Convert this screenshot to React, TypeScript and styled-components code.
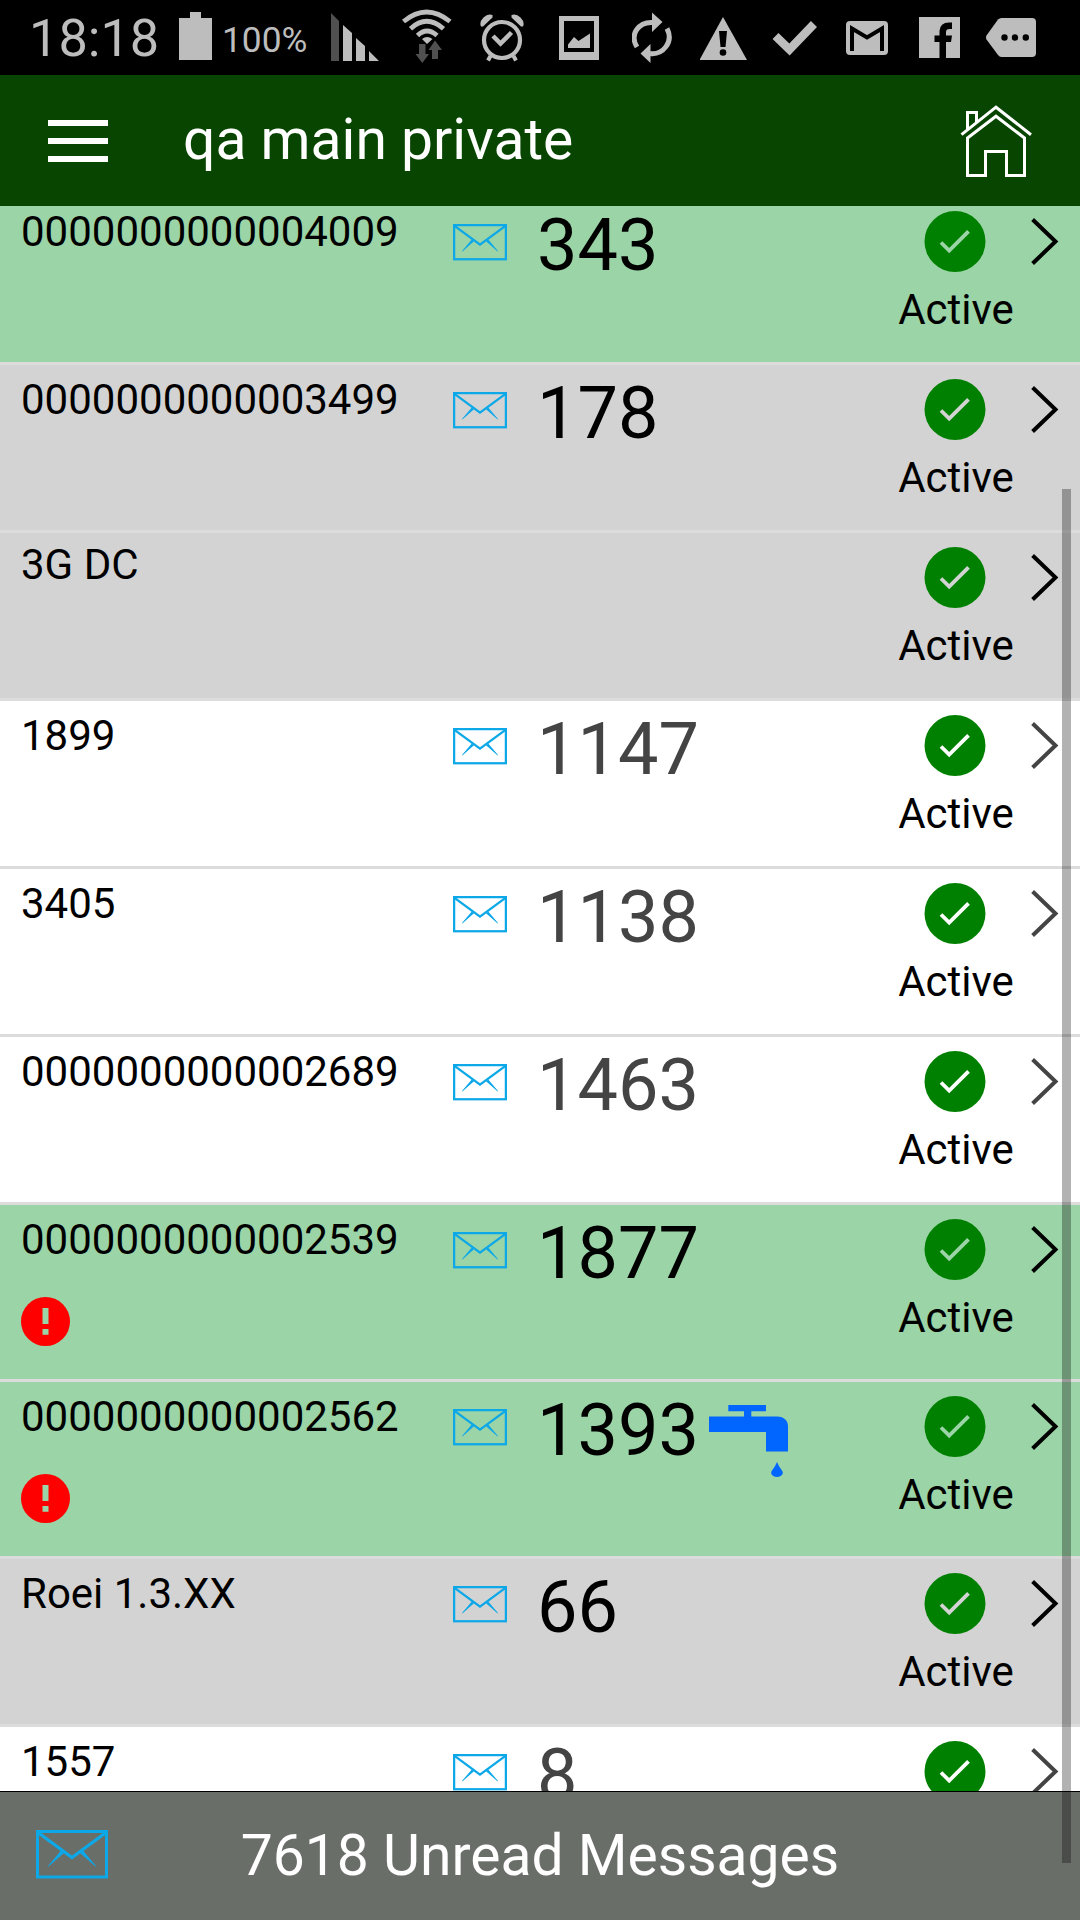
import React from 'react';
import styled, { createGlobalStyle } from 'styled-components';

const GlobalStyle = createGlobalStyle`
  *, *::before, *::after { box-sizing: border-box; }
  body {
    margin: 0;
    background: #000;
    font-family: Roboto, "Noto Sans", sans-serif;
    -webkit-font-smoothing: antialiased;
  }
  svg { display: block; flex: none; }
`;

const STATUS_GREY = '#bdbdbd';
const DIM_GREY = '#505050';
const MAIL_BLUE = '#0ca8e8';

type Tone = 'green' | 'grey' | 'white';
const toneColor: Record<Tone, string> = {
  green: '#9bd4a6',
  grey: '#d3d3d3',
  white: '#ffffff',
};

const Screen = styled.div`
  position: relative;
  display: flex;
  flex-direction: column;
  width: 1080px;
  height: 1920px;
  overflow: hidden;
`;

const StatusBar = styled.div`
  display: flex;
  flex: none;
  height: 75px;
  background: #000;
  color: ${STATUS_GREY};
`;

const Clock = styled.span`
  width: 149px;
  padding-left: 29px;
  font-size: 52.3px;
  line-height: 76px;
  white-space: nowrap;
`;

const BatteryLevel = styled.span`
  width: 109px;
  padding-left: 10px;
  font-size: 35.3px;
  line-height: 80px;
  white-space: nowrap;
`;

const StatusIcon = styled.svg<{ $before: number }>`
  height: 75px;
  margin-left: ${(p) => p.$before}px;
`;

const AppBar = styled.header`
  display: flex;
  flex: none;
  align-items: center;
  height: 131px;
  padding: 0 48px;
  background: #074500;
  color: #fff;
`;

const MenuButton = styled.button`
  display: flex;
  flex-direction: column;
  gap: 12px;
  width: 60px;
  padding: 0;
  border: 0;
  background: none;
`;

const MenuLine = styled.span`
  height: 6px;
  background: #fff;
`;

const Title = styled.h1`
  flex: 1;
  margin: 0;
  padding: 0 0 2px 75px;
  font-size: 57px;
  font-weight: 400;
  line-height: 68px;
`;

const List = styled.main`
  flex: 1;
  min-height: 0;
  overflow: hidden;
  background: #fff;
`;

const Rows = styled.div`
  display: flex;
  flex-direction: column;
  margin-top: -9px;
`;

const Row = styled.div<{ $tone: Tone; $tall: boolean }>`
  display: flex;
  flex: none;
  align-items: flex-start;
  height: ${(p) => (p.$tall ? 177 : 168)}px;
  border-bottom: 3px solid #dcdcdc;
  background: ${(p) => toneColor[p.$tone]};
  color: #000;
`;

const NameCell = styled.div<{ $raised: boolean }>`
  display: flex;
  flex-direction: column;
  gap: 32px;
  width: 453px;
  padding: ${(p) => (p.$raised ? 7 : 10)}px 0 0 21px;
`;

const Name = styled.span`
  font-size: 42px;
  line-height: 50px;
  white-space: nowrap;
`;

const MessagesCell = styled.div`
  display: flex;
  flex: 1;
  align-items: flex-start;
`;

const EnvelopeBox = styled.div`
  padding-top: 27px;
`;

const Count = styled.span<{ $muted: boolean }>`
  margin: 7px 0 0 30px;
  font-size: 72px;
  line-height: 84px;
  color: ${(p) => (p.$muted ? '#444' : '#000')};
`;

const FaucetBox = styled.div`
  padding: 23px 0 0 10px;
`;

const StatusCell = styled.div`
  display: flex;
  flex-direction: column;
  gap: 12px;
  align-items: center;
  width: 114px;
  padding-top: 14px;
`;

const StatusMark = styled.div`
  padding-right: 2px;
`;

const StatusLabel = styled.span`
  font-size: 42px;
  line-height: 50px;
`;

const ChevronBox = styled.div`
  width: 67px;
  padding: 20px 0 0 18px;
`;

const Footer = styled.footer`
  display: flex;
  flex: none;
  align-items: center;
  height: 129px;
  padding: 0 36px;
  border-top: 1px solid #000;
  background: #6a6e69;
  color: #fff;
`;

const FooterEnvelope = styled.div`
  padding-bottom: 3px;
`;

const FooterText = styled.span`
  flex: 1;
  padding-right: 72px;
  font-size: 57px;
  line-height: 68px;
  text-align: center;
`;

const ScrollThumb = styled.div`
  position: absolute;
  top: 489px;
  right: 9px;
  width: 9px;
  height: 1374px;
  background: rgba(0, 0, 0, 0.3);
`;

const Envelope = ({ width }: { width: number }) => (
  <svg width={width} height={(width * 49) / 72} viewBox="0 0 72 49" fill="none" stroke={MAIL_BLUE}>
    <rect x="1.5" y="1.5" width="69" height="45.5" strokeWidth="3" />
    <path d="M2 2.5 36 27.5 70 2.5" strokeWidth="3.2" />
    <path d="M25 20.5 28 23 12.5 36.5 12 36ZM47 20.5 44 23 59.5 36.5 60 36Z" fill={MAIL_BLUE} stroke="none" />
  </svg>
);

const ActiveMark = ({ tick }: { tick: string }) => (
  <svg width="62" height="62" viewBox="0 0 62 62">
    <circle cx="31" cy="30.500" r="30.5" fill="#008000" />
    <path d="M17 31.500 25.2 39.500 44.500 20.300" fill="none" stroke={tick} strokeWidth="3.8" />
  </svg>
);

const Chevron = ({ color }: { color: string }) => (
  <svg width="28" height="48" viewBox="0 0 28 48" fill="none">
    <path d="M1.6 2.5 24.5 24.5 1.6 46.5" stroke={color} strokeWidth="4" />
  </svg>
);

const Alert = ({ mark }: { mark: string }) => (
  <svg width="49" height="49" viewBox="0 0 49 49">
    <circle cx="24.5" cy="24.5" r="24.5" fill="#ff0000" />
    <path d="M21.5 11h6v16h-6zM21.5 32h6v5.7h-6z" fill={mark} />
  </svg>
);

const Faucet = () => (
  <svg width="80" height="73" viewBox="0 0 80 73" fill="#0066ff">
    <path d="M19.3 0H57V6.3H42.3V11.5H68Q79 12 79 22V46.5H57V27H0V11.5H35V6.3H19.3Z" />
    <path d="M68 57Q69.5 61 73 65.5C75.500 69 72 72 68 72S60.500 69 63 65.500Q66.500 61 68 57Z" />
  </svg>
);

const Home = () => (
  <svg width="72" height="72" viewBox="960 105 72 72" fill="none" stroke="#fff" strokeWidth="3">
    <path d="M961.500 134.700 996 107.200 1031 134.700" />
    <path d="M967.500 130V112.500H976.500V122" />
    <path d="M967.500 175.500V138L996 116.200 1024.500 138V175.500H1006.500V151.500H985.500V175.500Z" />
  </svg>
);

interface Unit {
  name: string;
  count?: number;
  tone: Tone;
  alert?: boolean;
  faucet?: boolean;
}

const units: Unit[] = [
  { name: '0000000000004009', count: 343, tone: 'green' },
  { name: '0000000000003499', count: 178, tone: 'grey' },
  { name: '3G DC', tone: 'grey' },
  { name: '1899', count: 1147, tone: 'white' },
  { name: '3405', count: 1138, tone: 'white' },
  { name: '0000000000002689', count: 1463, tone: 'white' },
  { name: '0000000000002539', count: 1877, tone: 'green', alert: true },
  { name: '0000000000002562', count: 1393, tone: 'green', alert: true, faucet: true },
  { name: 'Roei 1.3.XX', count: 66, tone: 'grey' },
  { name: '1557', count: 8, tone: 'white' },
];

const UnitRow = ({ unit }: { unit: Unit }) => {
  const bg = toneColor[unit.tone];
  const muted = unit.tone === 'white';
  return (
    <Row $tone={unit.tone} $tall={!!unit.alert}>
      <NameCell $raised={unit.count === undefined}>
        <Name>{unit.name}</Name>
        {unit.alert && <Alert mark={bg} />}
      </NameCell>
      <MessagesCell>
        {unit.count !== undefined && (
          <>
            <EnvelopeBox>
              <Envelope width={54} />
            </EnvelopeBox>
            <Count $muted={muted}>{unit.count}</Count>
          </>
        )}
        {unit.faucet && (
          <FaucetBox>
            <Faucet />
          </FaucetBox>
        )}
      </MessagesCell>
      <StatusCell>
        <StatusMark>
          <ActiveMark tick={bg} />
        </StatusMark>
        <StatusLabel>Active</StatusLabel>
      </StatusCell>
      <ChevronBox>
        <Chevron color={muted ? '#444' : '#000'} />
      </ChevronBox>
    </Row>
  );
};

const StatusIcons = () => (
  <>
    <StatusIcon $before={10} width="49" viewBox="331 0 49 75" fill={STATUS_GREY}>
      <path d="M331 13 339 21V61H331Z" fill={DIM_GREY} />
      <path d="M343 25 352 33V61H343ZM356 38 365 46V61H356ZM369 51 379 61H369Z" />
    </StatusIcon>
    <StatusIcon $before={22} width="50" viewBox="402 0 50 75" fill="none" stroke={STATUS_GREY} strokeWidth="4.800">
      <path d="M403.500 21.500Q426.500 2.500 450 21.500" />
      <path d="M410.500 28.700Q426.500 14 443.500 28.700" />
      <path d="M417.500 35.500Q427 26.500 437 35.500" />
      <path d="M422 39Q427 35 432.500 39L427 44Z" fill={STATUS_GREY} stroke="none" />
      <path d="M419 44H425.500V54H429L422.300 63 415.500 54H419ZM432 59V50H428.500L435 40.500 442 50H438V59Z" fill={DIM_GREY} stroke="none" />
    </StatusIcon>
    <StatusIcon $before={28} width="44" viewBox="480 0 44 75" fill="none" stroke={STATUS_GREY}>
      <circle cx="502" cy="40" r="18" strokeWidth="4.200" />
      <path d="M493 36 500.500 43.500 511.500 32.500" strokeWidth="4.500" />
      <path d="M490.500 56 488 60.500M513.500 56 516 60.500" strokeWidth="4" />
      <path d="M481 26.500Q479 22 483.500 17.500 488 13 492.500 15L492.500 17.500 483 26.500ZM523 26.500Q525 22 520.500 17.500 516 13 511.500 15V17.500L521 26.500Z" fill={STATUS_GREY} stroke="none" />
    </StatusIcon>
    <StatusIcon $before={35} width="40" viewBox="559 0 40 75">
      <path d="M559 16H599V60H559ZM564 21V52H594V21Z" fill={STATUS_GREY} fillRule="evenodd" />
      <path d="M568 48V44.500L574 37 578.500 41 590 33.500V48Z" fill={STATUS_GREY} />
    </StatusIcon>
    <StatusIcon $before={33} width="40" viewBox="632 0 40 75" fill="none" stroke={STATUS_GREY} strokeWidth="5">
      <path d="M637 47C629 34 639 21.500 653 22.500" />
      <path d="M667 28.500C674 42 663 55 650 53.500" />
      <path d="M652 12.500 662.500 22 652 32ZM650.500 44V63L640.500 53.500Z" fill={STATUS_GREY} stroke="none" />
    </StatusIcon>
    <StatusIcon $before={28} width="47" viewBox="700 0 47 75">
      <path d="M723 17 747 60H699.500Z" fill={STATUS_GREY} />
      <path d="M719 31H727L725.500 47H720.500Z" fill="#000" />
      <circle cx="723" cy="52.500" r="3.300" fill="#000" />
    </StatusIcon>
    <StatusIcon $before={25} width="45" viewBox="772 0 45 75" fill="none">
      <path d="M775.500 36 789.500 49.500 814 24" stroke={STATUS_GREY} strokeWidth="8.500" />
    </StatusIcon>
    <StatusIcon $before={29} width="42" viewBox="846 0 42 75">
      <rect x="846" y="21" width="42" height="34" rx="4" fill={STATUS_GREY} />
      <path d="M852 51V28.500L867 37.500 882 28.500V51" fill="none" stroke="#000" strokeWidth="4" />
    </StatusIcon>
    <StatusIcon $before={31} width="41" viewBox="919 0 41 75">
      <path d="M919 17H960V58H919Z" fill={STATUS_GREY} />
      <path d="M939.500 58V42H934.500V35.500H939.500V31Q940 22.500 949 22.500H952V29H949.500Q946 29 946 32V35.500H952L951 42H946V58Z" fill="#000" />
    </StatusIcon>
    <StatusIcon $before={26} width="50" viewBox="986 0 50 75">
      <path d="M998 19.500Q999.500 18 1001.500 18H1032Q1036 18 1036 22V53Q1036 57 1032 57H1001.500Q999.500 57 998 55L986.500 39.500Q985.500 37.500 986.500 35.500Z" fill={STATUS_GREY} />
      <path d="M1001.300 37.500a3.200 3.200 0 1 0 6.400 0a3.200 3.200 0 1 0 -6.400 0M1011.800 37.500a3.200 3.200 0 1 0 6.400 0a3.200 3.200 0 1 0 -6.400 0M1022.600 37.500a3.200 3.200 0 1 0 6.400 0a3.200 3.200 0 1 0 -6.400 0" />
    </StatusIcon>
  </>
);

export default function App() {
  return (
    <Screen>
      <GlobalStyle />
      <StatusBar>
        <Clock>18:18</Clock>
        <StatusIcon $before={30} width="33" viewBox="179 0 33 75">
          <path d="M190 12H201V18H212V60H179V18H190Z" fill={STATUS_GREY} />
        </StatusIcon>
        <BatteryLevel>100%</BatteryLevel>
        <StatusIcons />
      </StatusBar>
      <AppBar>
        <MenuButton aria-label="Menu">
          <MenuLine />
          <MenuLine />
          <MenuLine />
        </MenuButton>
        <Title>qa main private</Title>
        <Home />
      </AppBar>
      <List>
        <Rows>
          {units.map((unit) => (
            <UnitRow key={unit.name} unit={unit} />
          ))}
        </Rows>
      </List>
      <Footer>
        <FooterEnvelope>
          <Envelope width={72} />
        </FooterEnvelope>
        <FooterText>7618 Unread Messages</FooterText>
      </Footer>
      <ScrollThumb />
    </Screen>
  );
}
